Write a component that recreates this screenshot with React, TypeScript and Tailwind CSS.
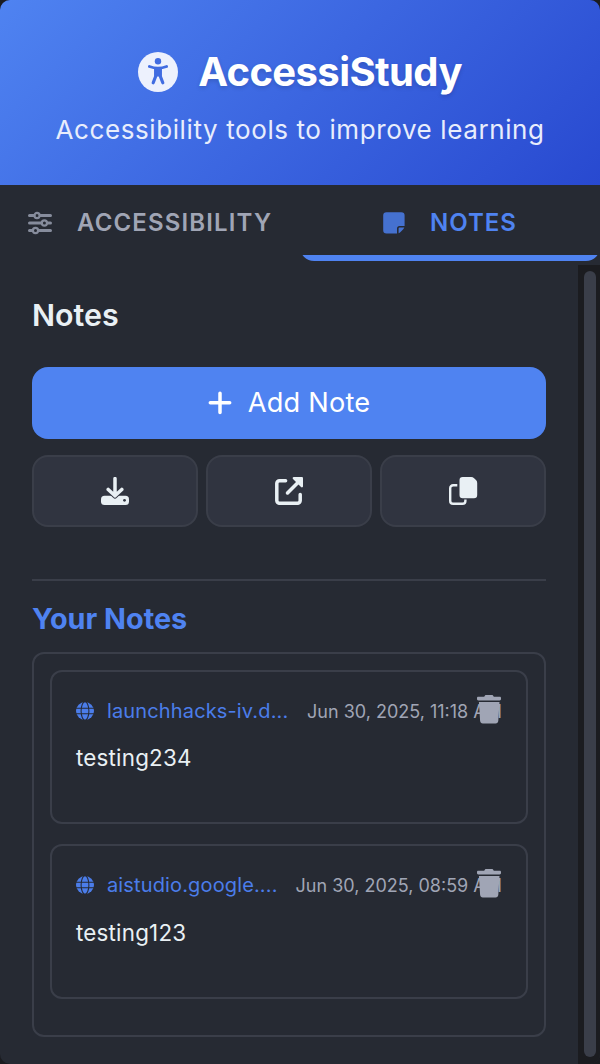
import type { ReactNode } from 'react';

function AccessIcon() {
  return (
    <svg className="size-10" viewBox="0 0 40 40">
      <circle cx="20" cy="20" r="20" fill="#edf1fd" />
      <g fill="none" stroke="#416ce1" strokeLinecap="round" strokeLinejoin="round">
        <circle cx="20" cy="9.300" r="3.200" fill="#416ce1" stroke="none" />
        <path d="M11.400 14.500c5.500 2.200 11.700 2.200 17.200 0" strokeWidth="2.900" />
        <path d="M22.300 17v7.200l2.500 6.600M17.700 17v7.200l-2.500 6.600" strokeWidth="3.200" />
        <path d="M17.500 16.500h5v7h-5z" fill="#416ce1" strokeWidth="2.200" />
      </g>
    </svg>
  );
}

function SlidersIcon() {
  return (
    <svg className="h-6 w-6" viewBox="0 0 24 24" fill="none" stroke="#868c9c" strokeWidth="3" strokeLinecap="round">
      <path d="M1.500 4.500h4.500M12.300 4.500h10.200M1.500 12h12M19.600 12h2.900M1.500 19.500h2.800M10.600 19.500h11.900" />
      <g strokeWidth="2.200">
        <circle cx="9" cy="4.500" r="2.600" />
        <circle cx="16.400" cy="12" r="2.600" />
        <circle cx="7.500" cy="19.500" r="2.600" />
      </g>
    </svg>
  );
}

function NoteIcon() {
  return (
    <svg className="h-[22px] w-[22px]" viewBox="0 0 22 22" fill="#4571cf">
      <path d="M3.500 0.200h14.800a3.300 3.300 0 0 1 3.300 3.300V14h-5a2.600 2.600 0 0 0-2.600 2.600v5H3.500a3.300 3.300 0 0 1-3.300-3.300V3.500A3.300 3.300 0 0 1 3.500 0.200Z" />
      <path d="M21.300 15.500c-.3.800-.7 1.300-1.300 1.900l-2.500 2.500c-.6.600-1.100 1-1.900 1.300v-4.600a1.100 1.100 0 0 1 1.100-1.100Z" />
    </svg>
  );
}

function PlusIcon() {
  return (
    <svg className="size-6" viewBox="0 0 24 24" fill="none" stroke="#fff" strokeWidth="3.500" strokeLinecap="round">
      <path d="M12 2.200v19.200M2.300 11.800h19.400" />
    </svg>
  );
}

function DownloadIcon() {
  return (
    <svg className="size-7" viewBox="0 0 28 28" fill="none" stroke="#e9f0f4" strokeLinecap="round" strokeLinejoin="round">
      <rect x="0" y="18.800" width="28" height="9.200" rx="3.500" fill="#e9f0f4" stroke="none" />
      <circle cx="23.500" cy="23.300" r="1.400" fill="#303440" stroke="none" />
      <path strokeWidth="5.400" stroke="#303440" d="M7.200 12.400l6.800 6.400 6.800-6.400" />
      <path strokeWidth="3.500" d="M14 1.600v17.300M7.200 12.400l6.800 6.400 6.800-6.400" />
    </svg>
  );
}

function OpenIcon() {
  return (
    <svg className="size-7" viewBox="0 0 28 28" fill="none" stroke="#e9f0f4" strokeWidth="3.500" strokeLinecap="round" strokeLinejoin="round">
      <path d="M10.600 3.700H4.500a2.700 2.700 0 0 0-2.700 2.700v17.200a2.700 2.700 0 0 0 2.700 2.700h18a2.700 2.700 0 0 0 2.700-2.700v-6" />
      <path d="M12.500 16 24 4.500" />
      <path d="M18.800 0h7.800c.9 0 1.400.5 1.400 1.400v7.900c0 1.100-1.200 1.500-2 .7l-8-8c-.8-.8-.3-2 .8-2Z" fill="#e9f0f4" stroke="none" />
    </svg>
  );
}

function CopyIcon() {
  return (
    <svg className="size-7 overflow-visible" viewBox="0 0 28 28">
      <path d="M8.300 8.300H4.100A2.900 2.900 0 0 0 1.200 11.200v12.700a2.900 2.900 0 0 0 2.900 2.900h9.400a2.900 2.900 0 0 0 2.900-2.900v-1.300" fill="none" stroke="#e9f0f4" strokeWidth="2.400" />
      <path d="M13.700 0h8.500c1.100 0 2.100.4 2.900 1.200L27 3.100c.8.800 1.200 1.800 1.200 2.900v12a3.200 3.200 0 0 1-3.200 3.200H13.700a3.200 3.200 0 0 1-3.200-3.200V3.200A3.200 3.200 0 0 1 13.700 0Z" fill="#e9f0f4" />
    </svg>
  );
}

function GlobeIcon() {
  return (
    <svg className="size-[18px] shrink-0" viewBox="0 0 18 18">
      <circle cx="9" cy="9" r="9" fill="#4b7dea" />
      <g fill="none" stroke="#262a33" strokeWidth="1.050">
        <ellipse cx="9" cy="9" rx="3.900" ry="9.300" />
        <path d="M0 6.200h18M0 11.800h18" />
      </g>
    </svg>
  );
}

function TrashIcon() {
  return (
    <svg className="h-[28.500px] w-6" viewBox="0 0 24 28" preserveAspectRatio="none" fill="#a0a5b5">
      <path d="M1.300 1.700h5.900L8 .5c.3-.4.700-.5 1.200-.5h5.600c.5 0 .9.100 1.200.5l.8 1.200h5.900c.8 0 1.300.5 1.300 1.300v1c0 .8-.5 1.300-1.300 1.300H1.300C.5 5.300 0 4.800 0 4V3c0-.8.500-1.300 1.300-1.300ZM1.900 6.800h20.600l-1.200 18.600c-.1 1.600-1.100 2.600-2.700 2.600H5.800c-1.600 0-2.600-1-2.700-2.600Z" />
    </svg>
  );
}

function ActionButton({ label, children }: { label: string; children: ReactNode }) {
  return (
    <button aria-label={label} className="flex h-[72px] items-center justify-center rounded-2xl border-2 border-[#3a3e49] bg-[#303440]">
      {children}
    </button>
  );
}

interface Note {
  site: string;
  date: string;
  text: string;
}

const notes: Note[] = [
  { site: 'launchhacks-iv.d...', date: 'Jun 30, 2025, 11:18 AM', text: 'testing234' },
  { site: 'aistudio.google....', date: 'Jun 30, 2025, 08:59 AM', text: 'testing123' },
];

function NoteCard({ note }: { note: Note }) {
  return (
    <article className="relative h-[154.400px] shrink-0 rounded-xl border-2 border-[#3a3e49] px-6 pt-6">
      <div className="flex h-[30px] items-center justify-between">
        <div className="flex items-center gap-[13px] text-[20px] tracking-[0.140px] text-[#4b7dea]">
          <GlobeIcon />
          <span className="whitespace-nowrap">{note.site}</span>
        </div>
        <time className="whitespace-nowrap text-[18px] text-[#a0a5b5]">{note.date}</time>
      </div>
      <p className="mt-[14.300px] text-[22.400px] leading-9 tracking-[0.200px] text-[#e9f0f4]">{note.text}</p>
      <button aria-label="Delete note" className="absolute top-[23px] right-[25px]">
        <TrashIcon />
      </button>
    </article>
  );
}

export default function App() {
  return (
    <div className="h-[1064px] w-[600px] bg-[#1b1c20] font-['Inter',sans-serif]">
      <div className="flex h-full flex-col overflow-hidden rounded-[10px] bg-[#262a33]">
        <header className="flex h-[185px] shrink-0 flex-col items-center bg-[linear-gradient(135deg,#4f83f1_0%,#2849d0_100%)] pt-12">
          <div className="flex h-12 items-center gap-5">
            <AccessIcon />
            <h1 className="text-[40px] leading-none font-bold tracking-[-0.6px] text-white [text-shadow:0_2px_4px_rgba(0,0,0,0.15)]">AccessiStudy</h1>
          </div>
          <p className="mt-4 text-[26px] leading-9 tracking-[0.6px] text-[#e8edfc]">Accessibility tools to improve learning</p>
        </header>

        <nav className="grid h-20 shrink-0 grid-cols-2 text-[24px] font-semibold">
          <button className="flex items-center gap-[25px] pb-1 pl-7 text-[#a0a5b5]">
            <SlidersIcon />
            <span className="tracking-[1.150px]">ACCESSIBILITY</span>
          </button>
          <button className="flex flex-col text-[#4f83f1]">
            <span className="flex h-[70px] w-full items-center gap-[25px] pt-[6px] pl-[83px]">
              <NoteIcon />
              <span className="tracking-[1px]">NOTES</span>
            </span>
            <span className="flex h-[6px] w-full items-end overflow-hidden">
              <span className="block h-8 w-full shrink-0 rounded-b-[14px] bg-[#4f83f1]" />
            </span>
          </button>
        </nav>

        <div className="flex min-h-0 flex-1">
          <main className="w-[578px] shrink-0 px-8 pt-8">
            <h2 className="h-[70px] text-[30.400px] leading-9 font-semibold text-[#e9f0f4]">Notes</h2>
            <button className="flex h-[72px] w-full items-center justify-center gap-4 rounded-2xl bg-[#4f83f1] text-[27.200px] tracking-[0.200px] text-white">
              <PlusIcon />
              Add Note
            </button>
            <div className="mt-4 grid grid-cols-3 gap-2">
              <ActionButton label="Download"><DownloadIcon /></ActionButton>
              <ActionButton label="Open"><OpenIcon /></ActionButton>
              <ActionButton label="Copy"><CopyIcon /></ActionButton>
            </div>
            <section className="mt-[52px] border-t-2 border-[#3a3e49] pt-5">
              <h3 className="h-[51px] text-[28.800px] leading-9 font-bold text-[#4f83f1]">Your Notes</h3>
              <div className="flex h-[385px] flex-col gap-5 rounded-xl border-2 border-[#3a3e49] p-4">
                {notes.map((note) => (
                  <NoteCard key={note.text} note={note} />
                ))}
              </div>
            </section>
          </main>
          <div className="flex-1 bg-[#1b1c20] px-[6px] pt-[6px] pb-[7px]">
            <div className="h-full w-3 rounded-full bg-[#3a3e49]" />
          </div>
        </div>
      </div>
    </div>
  );
}
